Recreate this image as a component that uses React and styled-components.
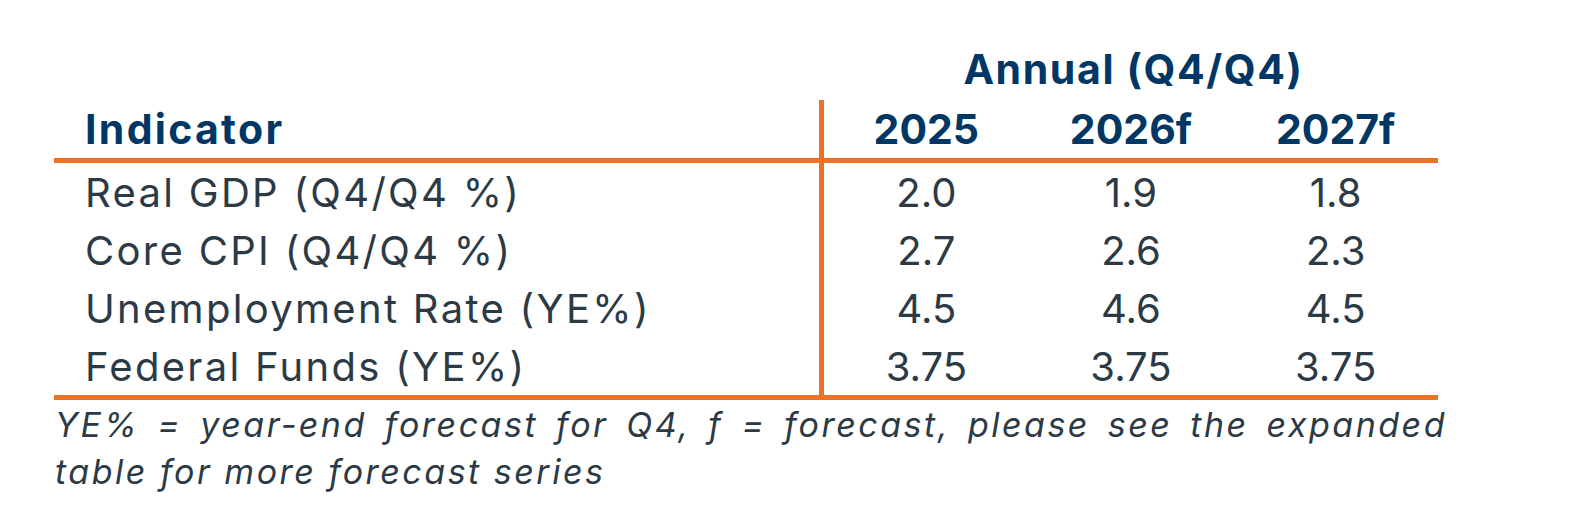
import React from 'react'
import styled, { createGlobalStyle } from 'styled-components'

// Constants
const NAVY = '#003764'
const INK = '#2c3a46'
const ORANGE = '#ee7124'

const rows = [
    { label: 'Real GDP (Q4/Q4 %)', values: ['2.0', '1.9', '1.8'] },
    { label: 'Core CPI (Q4/Q4 %)', values: ['2.7', '2.6', '2.3'] },
    { label: 'Unemployment Rate (YE%)', values: ['4.5', '4.6', '4.5'] },
    { label: 'Federal Funds (YE%)', values: ['3.75', '3.75', '3.75'] },
]
const years = ['2025', '2026f', '2027f']

// Styled components
const GlobalStyle = createGlobalStyle`
    html, body {
        margin: 0;
        padding: 0;
        background: #ffffff;
    }
    body {
        font-family: 'Inter', 'Liberation Sans', sans-serif;
    }
`
const Main = styled.div`
    width: 1572px;
    height: 530px;
    box-sizing: border-box;
    padding: 38px 0 0 54px;
    background: #ffffff;
`
const Table = styled.div`
    width: 1384px;
    display: grid;
    grid-template-columns: 770px repeat(3, 1fr);
`
const GroupTitle = styled.div`
    grid-column: 2 / span 3;
    height: 62px;
    display: flex;
    align-items: center;
    justify-content: center;
    padding-left: 5px;
    color: ${NAVY};
    font-size: 41px;
    font-weight: 700;
    letter-spacing: 1.6px;
`
const Cell = styled.div`
    display: flex;
    align-items: center;
    box-sizing: border-box;
    height: ${(props) => (props.line ? '63px' : '58px')};
    justify-content: ${(props) => (props.first ? 'flex-start' : 'center')};
    padding-left: ${(props) => (props.first ? '31px' : '0')};
    border-right: ${(props) => (props.first ? `5px solid ${ORANGE}` : 'none')};
    border-bottom: ${(props) => (props.line ? `5px solid ${ORANGE}` : 'none')};
    color: ${(props) => (props.head ? NAVY : INK)};
    font-size: ${(props) => (props.head ? '41px' : '40px')};
    font-weight: ${(props) => (props.head ? 700 : 400)};
    letter-spacing: ${(props) => (props.first ? (props.head ? '2.3px' : '2.3px') : '0')};
`
const Footnote = styled.div`
    width: 1392px;
    margin: 1px 0 0 1px;
    color: ${INK};
    font-size: 34px;
    font-style: italic;
    line-height: 47px;
    letter-spacing: 2.5px;
`
const FootLine = styled.span`
    display: block;
    text-align: ${(props) => (props.spread ? 'justify' : 'left')};
    text-align-last: ${(props) => (props.spread ? 'justify' : 'left')};
`

const App = () => {
    return (
        <Main>
            <GlobalStyle />
            <Table>
                <div />
                <GroupTitle>Annual (Q4/Q4)</GroupTitle>
                <Cell head first line>Indicator</Cell>
                {years.map((year) => (
                    <Cell head line key={year}>
                        {year}
                    </Cell>
                ))}
                {rows.map((row, index) => (
                    <React.Fragment key={row.label}>
                        <Cell first line={index === rows.length - 1}>
                            {row.label}
                        </Cell>
                        {row.values.map((value, i) => (
                            <Cell key={i} line={index === rows.length - 1}>
                                {value}
                            </Cell>
                        ))}
                    </React.Fragment>
                ))}
            </Table>
            <Footnote>
                <FootLine spread>YE% = year-end forecast for Q4, f = forecast, please see the expanded</FootLine>
                <FootLine>table for more forecast series</FootLine>
            </Footnote>
        </Main>
    )
}

export default App
